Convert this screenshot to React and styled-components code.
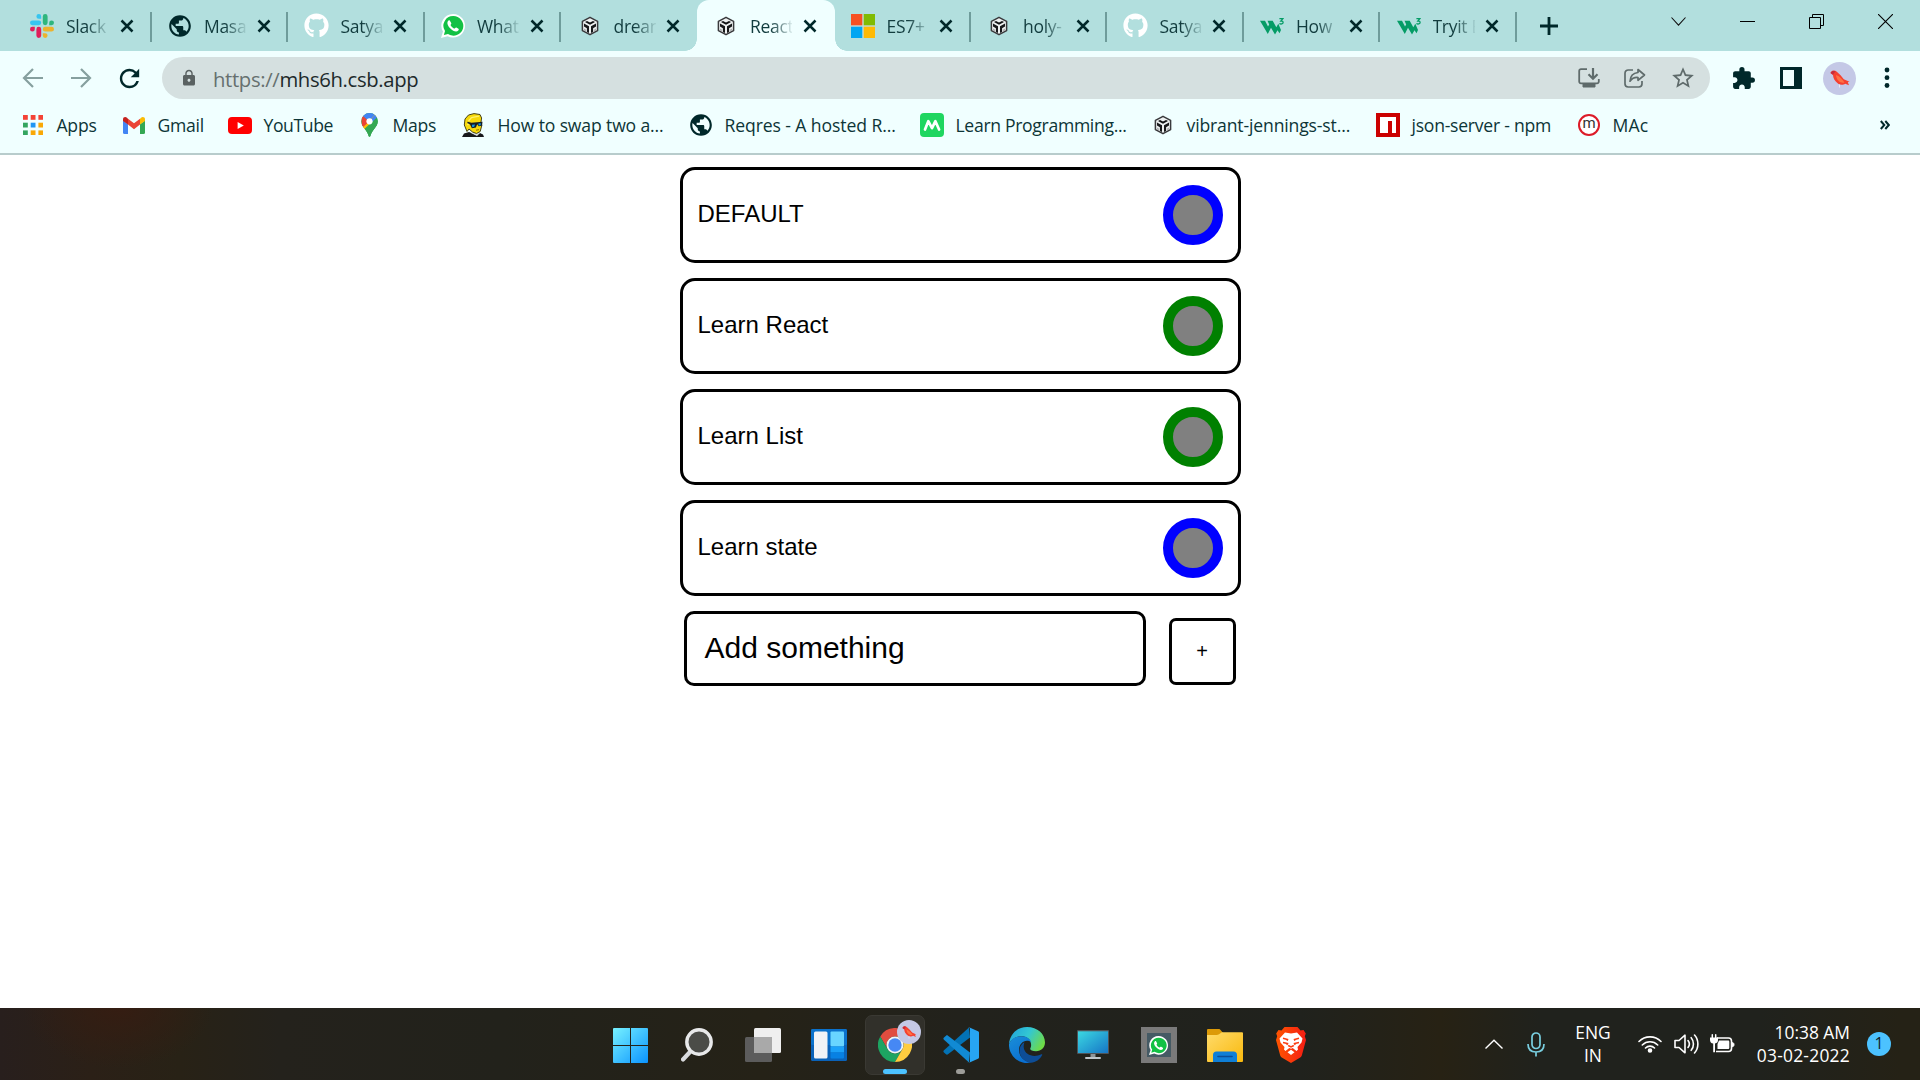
import React from "react";
import styled, { createGlobalStyle, css } from "styled-components";
import { FaGithub } from "react-icons/fa";
import { MdPublic, MdExtension, MdStarOutline, MdLock, MdRefresh } from "react-icons/md";

const GlobalStyle = createGlobalStyle`
  html, body { margin: 0; padding: 0; }
  body {
    width: 1920px;
    height: 1080px;
    overflow: hidden;
    background: #ffffff;
    font-family: "Open Sans", "Noto Sans", sans-serif;
  }
  *, *::before, *::after { box-sizing: border-box; }
  svg { display: block; flex: none; }
`;

const INK = "#00282a";

const Screen = styled.div`
  width: 1920px;
  height: 1080px;
  display: flex;
  flex-direction: column;
  overflow: hidden;
`;

/* ---------- tab strip ---------- */
const TabStrip = styled.div`
  height: 51px;
  background: #b2dfde;
  display: flex;
  align-items: stretch;
  padding-left: 14px;
  flex: none;
`;

const Tab = styled.div`
  position: relative;
  width: 136.5px;
  display: flex;
  align-items: center;
  padding: 0 0 0 17.5px;
  flex: none;
  ${(p) =>
    p.$active &&
    css`
      background: #f0ffff;
      border-radius: 12px 12px 0 0;
      width: 138px;
      margin-right: -1.5px;
      &::before, &::after {
        content: "";
        position: absolute;
        bottom: 0;
        width: 12px;
        height: 12px;
      }
      &::before {
        left: -12px;
        background: radial-gradient(circle at 0 0, transparent 11.5px, #f0ffff 12px);
      }
      &::after {
        right: -12px;
        background: radial-gradient(circle at 100% 0, transparent 11.5px, #f0ffff 12px);
      }
    `}
`;

const TabDivider = styled.span`
  position: absolute;
  right: -1px;
  top: 12px;
  width: 2px;
  height: 30px;
  background: #6f9c9b;
`;

const IconBox = styled.span`
  width: 24px;
  height: 24px;
  display: flex;
  align-items: center;
  justify-content: center;
  flex: none;
  margin-left: ${(p) => p.$shift || 0}px;
`;

const TabTitle = styled.span`
  width: 42px;
  margin-left: 12px;
  overflow: hidden;
  white-space: nowrap;
  font-size: 17.5px;
  letter-spacing: -0.3px;
  line-height: 26px;
  color: #123c3e;
  mask-image: linear-gradient(90deg, #000 50%, transparent 105%);
`;

const CloseBox = styled.span`
  display: flex;
  margin-left: ${(p) => 10.5 + (p.$extra || 0)}px;
`;

const NewTab = styled.div`
  display: flex;
  align-items: center;
  margin-left: 24px;
`;

const WindowButtons = styled.div`
  margin-left: auto;
  display: flex;
  align-items: flex-start;
  gap: 54px;
  padding: 14px 27px 0 0;
`;

/* ---------- toolbar ---------- */
const Toolbar = styled.div`
  height: 54px;
  padding: 6px 24px 6px 22px;
  display: flex;
  align-items: center;
  background: #f0ffff;
  flex: none;
`;

const NavButtons = styled.div`
  display: flex;
  align-items: center;
  width: 140px;
`;

const AddressBar = styled.div`
  width: 1548px;
  height: 42px;
  border-radius: 21px;
  background: #d5e0e0;
  display: flex;
  align-items: center;
  padding: 0 14px 0 18px;
`;

const Url = styled.span`
  margin-left: 15px;
  padding-top: 1px;
  font-size: 20.3px;
  line-height: 30px;
  color: #1d2a2b;
  letter-spacing: -0.35px;
`;

const Scheme = styled.span`
  color: #66706f;
`;

const AddressActions = styled.div`
  margin-left: auto;
  display: flex;
  align-items: center;
  gap: 24px;
`;

const ToolbarActions = styled.div`
  margin-left: auto;
  display: flex;
  align-items: center;
`;

const Spacer = styled.span`
  width: ${(p) => p.$w}px;
  flex: none;
`;

/* ---------- bookmarks ---------- */
const BookmarkBar = styled.div`
  height: 50px;
  padding: 0 30px 8px 21px;
  display: flex;
  align-items: center;
  background: #f0ffff;
  border-bottom: 2px solid #b8cccc;
  flex: none;
`;

const Bookmark = styled.div`
  display: flex;
  align-items: center;
  width: ${(p) => p.$w}px;
  flex: none;
`;

const BookmarkLabel = styled.span`
  margin-left: 11.5px;
  font-size: 17.6px;
  line-height: 26px;
  white-space: nowrap;
  color: #0d3537;
  letter-spacing: ${(p) => (p.$spacing === undefined ? -0.25 : p.$spacing)}px;
`;

const More = styled.span`
  margin-left: auto;
  display: flex;
`;

/* ---------- todo page ---------- */
const Page = styled.main`
  flex: 1;
  background: #ffffff;
  display: flex;
  flex-direction: column;
  align-items: center;
  padding-top: 12px;
  font-family: "Liberation Sans", Arial, sans-serif;
  color: #000;
`;

const TodoList = styled.div`
  width: 561px;
  display: flex;
  flex-direction: column;
  gap: 15px;
`;

const TodoCard = styled.div`
  height: 96px;
  border: 3px solid #000;
  border-radius: 15px;
  padding: 0 15px;
  display: flex;
  align-items: center;
  justify-content: space-between;
`;

const TodoText = styled.span`
  font-size: 24px;
  line-height: 28px;
  margin-bottom: 3px;
`;

const StatusDot = styled.span`
  width: 60px;
  height: 60px;
  border-radius: 50%;
  border: 10px solid ${(p) => (p.$done ? "green" : "blue")};
  background: gray;
`;

const AddRow = styled.div`
  display: flex;
  align-items: flex-end;
  justify-content: space-between;
  padding: 0 5px 0 4px;
`;

const AddField = styled.div`
  width: 462px;
  height: 75px;
  border: 3px solid #000;
  border-radius: 10px;
  padding: 0 18px 1px;
  display: flex;
  align-items: center;
  font-size: 30px;
`;

const AddButton = styled.div`
  width: 67px;
  height: 67px;
  margin-bottom: 1px;
  border: 3px solid #000;
  border-radius: 7px;
  display: flex;
  align-items: center;
  justify-content: center;
  font-size: 20px;
`;

/* ---------- taskbar ---------- */
const Taskbar = styled.footer`
  height: 72px;
  flex: none;
  display: flex;
  align-items: stretch;
  padding-left: 597.5px;
  background:
    radial-gradient(ellipse 95px 60px at 118px 0, #351d12 0%, rgba(53, 29, 18, 0) 100%),
    linear-gradient(90deg, #281f1d 0, #2b2017 90px, #282216 180px, #24221c 280px, #22221b 500px, #252217 760px, #22221c 960px, #20221d 1300px, #272214 1440px, #20221d 1540px, #20221d 1760px, #252216 1900px);
`;

const AppSlot = styled.div`
  position: relative;
  width: 66px;
  display: flex;
  align-items: center;
  justify-content: center;
  padding-top: 2px;
`;

const ActiveTile = styled.div`
  width: 60px;
  height: 60px;
  border-radius: 7px;
  background: #31302a;
  border: 1px solid #3a3933;
  display: flex;
  align-items: center;
  justify-content: center;
`;

const Indicator = styled.span`
  position: absolute;
  bottom: 6px;
  left: ${(p) => 33 - p.$w / 2}px;
  width: ${(p) => p.$w}px;
  height: 5px;
  border-radius: 3px;
  background: ${(p) => p.$color};
`;

const AvatarBadge = styled.span`
  position: absolute;
  left: 35px;
  top: 12px;
`;

const Tray = styled.div`
  margin-left: auto;
  display: flex;
  align-items: center;
  padding-right: 29px;
  color: #fff;
`;

const TrayText = styled.div`
  width: ${(p) => p.$w}px;
  text-align: ${(p) => p.$align};
  font-size: 17.4px;
  line-height: 23px;
  white-space: nowrap;
  padding-bottom: 1px;
`;

const TrayLine = styled.div`
  letter-spacing: ${(p) => p.$spacing || 0}px;
`;

const CountBadge = styled.div`
  width: 24px;
  height: 24px;
  border-radius: 50%;
  background: #4cc2ff;
  color: #10202a;
  font-size: 16px;
  line-height: 23px;
  text-align: center;
`;

/* ---------- drawings ---------- */
const Slack = () => (
  <svg width="24" height="24" viewBox="0 0 24 24">
    <path fill="#36c5f0" d="M8.8 0a2.4 2.4 0 1 0 0 4.8h2.4V2.4A2.4 2.4 0 0 0 8.8 0zM2.4 6.4a2.4 2.4 0 0 0 0 4.8h6.4a2.4 2.4 0 0 0 0-4.8z" />
    <path fill="#2eb67d" d="M24 8.8a2.4 2.4 0 1 0-4.8 0v2.4h2.4A2.4 2.4 0 0 0 24 8.8zM17.6 2.4a2.4 2.4 0 0 0-4.8 0v6.4a2.4 2.4 0 0 0 4.8 0z" />
    <path fill="#ecb22e" d="M15.2 24a2.4 2.4 0 1 0 0-4.8h-2.4v2.4a2.4 2.4 0 0 0 2.4 2.4zM21.6 17.6a2.4 2.4 0 0 0 0-4.8h-6.4a2.4 2.4 0 0 0 0 4.8z" />
    <path fill="#e01e5a" d="M0 15.2a2.4 2.4 0 1 0 4.8 0v-2.4H2.4A2.4 2.4 0 0 0 0 15.2zM6.400 21.600a2.400 2.400 0 0 0 4.800 0v-6.400a2.400 2.400 0 0 0-4.800 0z" />
  </svg>
);

const Globe = () => <MdPublic size={26} color={INK} />;
const Octocat = () => <FaGithub size={25} color="#ffffff" />;

const WhatsBubble = ({ size = 24 }) => (
  <svg width={size} height={size} viewBox="0 0 24 24">
    <path fill="#fff" d="M12.2 0A11.7 11.7 0 0 0 2 17.6L0 24l6.6-1.8A11.8 11.8 0 1 0 12.2 0z" />
    <path fill="#12c144" d="M12.2 2.1a9.7 9.7 0 0 0-8.2 15l-1.1 4 4.1-1.1a9.8 9.8 0 1 0 5.2-17.9z" />
    <path fill="#fff" d="M8.9 6.7c-.4-.6-1-.5-1.4-.1-2.2 2.200-.8 5.300 1.900 8 2.700 2.600 6 4 7.900 2 .6-.7.600-1.500.1-1.900l-2-1.100c-.5-.3-.8-.1-1.200.4-.4.600-.7.700-1.300.4-1.500-.7-2.500-1.700-3.300-3.100-.2-.4.100-.6.500-1.100.3-.4.300-.6.100-1.100z" />
  </svg>
);

const Cube = () => (
  <svg width="20" height="20" viewBox="0 0 20 20">
    <path d="M10 1.300 17.600 5.400v9.200L10 18.700 2.400 14.600V5.400z" fill="#eef1f1" stroke="#3a3a3d" strokeWidth="1.500" strokeLinejoin="round" />
    <path d="M5 6 7 4.900 10 6.500l3-1.600L15 6 10 8.800z" fill="#101113" />
    <path d="M4 7.400 9 10.200V17L6.900 15.900v-3.700L4 10.500z" fill="#18191b" />
    <path d="M16 7.400 11 10.200V17l2.100-1.100v-3.700l2.900-1.700z" fill="#18191b" />
    <path d="M4.200 12.600l1.500.9v1.800l-1.500-.8zM15.800 12.600l-1.500.9v1.800l1.500-.8z" fill="#9a9c9d" />
  </svg>
);

const Microsoft = () => (
  <svg width="24" height="24" viewBox="0 0 24 24">
    <rect width="24" height="24" fill="#c5dcd8" />
    <rect width="11.300" height="11.300" fill="#f65022" />
    <rect x="12.700" width="11.300" height="11.300" fill="#80bb03" />
    <rect y="12.700" width="11.300" height="11.300" fill="#01a6f2" />
    <rect x="12.700" y="12.700" width="11.300" height="11.300" fill="#ffba06" />
  </svg>
);

const W3 = () => (
  <svg width="24" height="24" viewBox="0 0 24 24">
    <path d="M0 6.800h5l3 5.800 1.200-2.200-1.700-3.600h5.200l3.600 6.500 2-3.500 2.700 6.200-1.500 3.200-2-3-2.500 4.300-4-6.700-3.200 6.200z" fill="#059c66" />
    <path d="M19.400 4.600h3.400l-1.900 2.400c1.400-.1 2.200.5 2.200 1.500 0 1.400-2.200 2-3.700 1" fill="none" stroke="#059c66" strokeWidth="1.300" />
  </svg>
);

const Close = () => (
  <svg width="14" height="14" viewBox="0 0 14 14">
    <path d="M1.500 1.500 12.500 12.500M12.500 1.500 1.500 12.500" stroke={INK} strokeWidth="2.500" />
  </svg>
);

const Arrow = ({ flip }) => (
  <svg width="22" height="22" viewBox="0 0 22 22">
    <path
      d={flip ? "M1 11H19.500M11 2l9 9-9 9" : "M21 11H2.500M11 2l-9 9 9 9"}
      fill="none"
      stroke="#86a09f"
      strokeWidth="2.200"
    />
  </svg>
);

const AppsGrid = () => (
  <svg width="20" height="20" viewBox="0 0 20 20">
    {["#f44336", "#f44336", "#f44336", "#34a560", "#2196f3", "#f9a806", "#34a560", "#f9a806", "#f9a806"].map((c, i) => (
      <rect key={i} x={(i % 3) * 7.7} y={Math.floor(i / 3) * 7.7} width="4.8" height="4.8" fill={c} />
    ))}
  </svg>
);

const Gmail = () => (
  <svg width="22" height="17" viewBox="0 0 22 17">
    <path d="M0 3.500 5 7.300V17H1.500A1.500 1.500 0 0 1 0 15.500z" fill="#4285f4" />
    <path d="M22 3.500 17 7.300V17h3.500a1.500 1.500 0 0 0 1.500-1.500z" fill="#34a853" />
    <path d="M5 1.700 11 6.200 17 1.700V7.600L11 12.200 5 7.600z" fill="#ea4335" />
    <path d="M0 2.400C0 .2 2.300-.6 4 .8L5 1.700V7.600L0 3.900z" fill="#c5221f" />
    <path d="M22 2.400C22 .2 19.700-.6 18 .8L17 1.700V7.600L22 3.900z" fill="#fbbc04" />
  </svg>
);

const YouTube = () => (
  <svg width="24" height="17" viewBox="0 0 24 17">
    <rect width="24" height="17" rx="4" fill="#ff0000" />
    <path d="M9.600 5v7l6.200-3.500z" fill="#fff" />
  </svg>
);

const MapsPin = () => (
  <svg width="17" height="24" viewBox="0 0 17 24">
    <defs>
      <clipPath id="pin">
        <path d="M8.500 0A8.300 8.300 0 0 0 .2 8.300c0 3 1.500 5 3.200 7.200C5.300 18 6.700 20 7.500 22.800c.3 1.200 1.700 1.200 2 0 .8-2.800 2.200-4.800 4.100-7.300 1.700-2.200 3.200-4.200 3.200-7.200A8.300 8.300 0 0 0 8.500 0z" />
      </clipPath>
    </defs>
    <g clipPath="url(#pin)">
      <rect width="17" height="24" fill="#34a853" />
      <path d="M0 16 17-3 17 3 3 18z" fill="#fbbc04" />
      <path d="M8.500 8.500 15 0h2v4L8.500 13z" fill="#4285f4" />
      <path d="M17 3.500v22H1.500L3.500 15.800z" fill="#34a853" />
      <path d="M0 0h15L8 8.500 0 2z" fill="#4285f4" />
      <path d="M0 0h2v3l6 5.500L1 16z" fill="#ea4335" />
      <path d="M2 14 8.500 8.500 3.400 16z" fill="#fbbc04" />
    </g>
    <circle cx="8.500" cy="8.300" r="3.100" fill="#fff" />
  </svg>
);

const CoolGuy = () => (
  <svg width="24" height="24" viewBox="0 0 24 24">
    <path d="M0 24l2-3.500 5-1.500 7 3 4-2 3 1.500 1 2.500z" fill="#17181b" />
    <path d="M9 20l6 3 3-3v-3z" fill="#d9dfe0" />
    <path d="M5 18.500 2.300 12 3 6 6.500 2 12 .6l6 .9L19.600 5 19 9l.8 3.500-1.600 6-3.700 2-4-1.500L7 16z" fill="#f6d90b" stroke="#33310e" strokeWidth=".9" />
    <path d="M6.500 8 9.500 4.500l7.500-1.300M5.500 12l1.500-2" fill="none" stroke="#fff16b" strokeWidth="1.300" />
    <path d="M5.500 8.800l4 .9L20.500 8.800 20 12.800l-3.300.5-1.500-2-1.300 3.200-4 .8-1.900-3.900-2.700-1.300z" fill="#131c24" />
    <path d="M10 11.800l3-.4-.8 2.400-2 .5zM16.300 10.600l2.600-.4-.3 2-1.800.3z" fill="#1399e8" />
    <path d="M14 17.200l3-.5" stroke="#8a6d08" strokeWidth="1" />
  </svg>
);

const MasaiM = () => (
  <svg width="24" height="24" viewBox="0 0 24 24">
    <rect width="24" height="24" rx="4" fill="#1fd660" />
    <path d="M5 16.500 8.300 8.200l3.700 7 3.400-7 3.700 8.300" fill="none" stroke="#fff" strokeWidth="2.700" strokeLinecap="round" strokeLinejoin="round" />
  </svg>
);

const Npm = () => (
  <svg width="24" height="24" viewBox="0 0 24 24">
    <rect width="24" height="24" fill="#cb0000" />
    <path d="M4 4h16v16h-4V8h-4v12H4z" fill="#fff" />
  </svg>
);

const MacLetter = styled.span`
  width: 22px;
  height: 22px;
  border: 2px solid #dc1b28;
  border-radius: 50%;
  background: #fff;
  color: #333;
  font-family: Roboto, sans-serif;
  font-size: 15px;
  line-height: 15px;
  text-align: center;
`;

const Bird = ({ size = 33 }) => (
  <svg width={size} height={size} viewBox="0 0 33 33">
    <circle cx="16.500" cy="16.500" r="16.500" fill="#c4c8e6" />
    <path d="M7.500 11c.6-2.400 4-3.400 6.300-1.200 2.700 2.200 5 4.700 7 7.400l5.700 2.600-1.700.5 1.200 3-3.800-1.600c-1.500 1.200-4.700 1.600-7 0-3.800-2.700-5-5.700-5.200-8.700z" fill="#f5402f" />
    <path d="M13 13c4 1.500 6 4 8.500 7.500-3.500 1-8-1.500-8.500-7.500z" fill="#ff7043" />
    <path d="M7.500 11l2-2.300 3 .6-2.500 3.500z" fill="#c52b3c" />
    <path d="M16.500 22.500v3" stroke="#e8e9f5" strokeWidth="1" />
  </svg>
);

const Install = () => (
  <svg width="22" height="20" viewBox="0 0 22 20" fill="none" stroke="#5f6b6b" strokeWidth="1.800">
    <path d="M9 1.200H3a1.800 1.800 0 0 0-1.800 1.800v10.500A1.800 1.800 0 0 0 3 15.300h16a1.800 1.800 0 0 0 1.800-1.800V11" />
    <path d="M15 0v10M10.500 6.200 15 10.700l4.500-4.500" strokeWidth="2.200" />
    <path d="M5 16h12v3H5z" fill="#5f6b6b" strokeWidth="1" />
  </svg>
);

const Share = () => (
  <svg width="22" height="20" viewBox="0 0 22 20" fill="none" stroke="#5f6b6b" strokeWidth="1.700" strokeLinejoin="round">
    <path d="M9 2H4.200A3.200 3.200 0 0 0 1 5.200v10.600A3.200 3.200 0 0 0 4.200 19h10.600a3.200 3.200 0 0 0 3.200-3.200V13" />
    <path d="M14 1.500 20.500 7 14 12.300V9.500c-3.500-.3-6 .8-8 3.700.3-4.700 3-8.200 8-8.700z" />
  </svg>
);

const SidePanel = () => (
  <svg width="22" height="22" viewBox="0 0 22 22">
    <rect width="22" height="22" fill={INK} />
    <rect x="3" y="3" width="11" height="16" fill="#f0ffff" />
  </svg>
);

const Dots = () => (
  <svg width="6" height="22" viewBox="0 0 6 22" fill={INK}>
    <circle cx="3" cy="3" r="2.400" />
    <circle cx="3" cy="10.700" r="2.400" />
    <circle cx="3" cy="18.500" r="2.400" />
  </svg>
);

const WindowsLogo = () => (
  <svg width="35" height="35" viewBox="0 0 35 35">
    <defs>
      <linearGradient id="win" x1="0" y1="0" x2="1" y2="1">
        <stop offset="0" stopColor="#77f2ff" />
        <stop offset="1" stopColor="#0a93ff" />
      </linearGradient>
    </defs>
    <path d="M1 0h16v17H0V1a1 1 0 0 1 1-1zM18 0h16a1 1 0 0 1 1 1v16H18zM0 18h17v17H1a1 1 0 0 1-1-1zM18 18h17v16a1 1 0 0 1-1 1H18z" fill="url(#win)" />
  </svg>
);

const SearchIcon = () => (
  <svg width="32" height="34" viewBox="0 0 32 34">
    <path d="M8.500 24.500 2 31.500" stroke="#d9dbdd" strokeWidth="4.200" strokeLinecap="round" />
    <circle cx="18" cy="14" r="12.200" fill="#4b4c48" stroke="#e8e9ea" strokeWidth="3.400" />
  </svg>
);

const TaskView = () => (
  <svg width="36" height="34" viewBox="0 0 36 34">
    <rect y="9" width="27" height="25" rx="1.500" fill="#5c5c5c" />
    <rect x="9" width="27" height="25" rx="1.500" fill="#efefef" />
    <path d="M9 9h18v16H10a1 1 0 0 1-1-1z" fill="#a9a9a9" />
  </svg>
);

const Widgets = () => (
  <svg width="36" height="32" viewBox="0 0 36 32">
    <rect width="36" height="32" rx="1.500" fill="#0a62b8" />
    <rect width="36" height="16" rx="1.500" fill="#0b72cc" />
    <rect x="3" y="2.500" width="13.500" height="27" rx="1.500" fill="#f1f3f6" />
    <rect x="19.500" y="2.500" width="13.500" height="15" rx="1" fill="#69d5ff" />
    <rect x="19.500" y="17.500" width="13.500" height="6" fill="#1ba1f9" />
    <rect x="19.500" y="23.500" width="13.500" height="6" rx="1" fill="#0781e4" />
  </svg>
);

const Chrome = () => (
  <svg width="34" height="34" viewBox="0 0 48 48">
    <path d="M24 12h20.800A24 24 0 0 0 3.200 12l10.400 18A12 12 0 0 1 24 12z" fill="#e04d3f" />
    <path d="M13.600 30 3.200 12A24 24 0 0 0 24 48l10.400-18a12 12 0 0 1-20.800 0z" fill="#1da462" />
    <path d="M34.400 30 24 48a24 24 0 0 0 20.800-36H24a12 12 0 0 1 10.400 18z" fill="#ffcd40" />
    <circle cx="24" cy="24" r="12" fill="#f1f6f4" />
    <circle cx="24" cy="24" r="9.400" fill="#4688f4" />
  </svg>
);

const VSCode = () => (
  <svg width="36" height="36" viewBox="0 0 36 36">
    <path d="M26 .5 1 23.200c-.8.800-.8 1.700 0 2.400l2 1.700c.6.500 1.300.5 2 0L27 10.500z" fill="#0372b5" />
    <path d="M26 35.500 1 12.800c-.8-.8-.8-1.700 0-2.400l2-1.700c.6-.5 1.300-.5 2 0L27 25.500z" fill="#118ad4" />
    <path d="M26 .2 35 4.300a1.500 1.500 0 0 1 1 1.500v24.400a1.500 1.500 0 0 1-1 1.500l-9 4.100c-.7.100-1.300 0-1.700-.5 1.200.9 2.700 0 2.700-1.400V2.100C27 .7 25.500-.2 24.300.7c.4-.5 1-.6 1.700-.5z" fill="#27a5f3" />
  </svg>
);

const Edge = () => (
  <svg width="36" height="36" viewBox="0 0 36 36">
    <defs>
      <linearGradient id="edgeTop" x1="0" y1=".2" x2="1" y2=".6">
        <stop offset="0" stopColor="#21a5dc" />
        <stop offset=".5" stopColor="#33c7d2" />
        <stop offset="1" stopColor="#6fdb45" />
      </linearGradient>
      <linearGradient id="edgeLeft" x1="0" y1="0" x2=".6" y2="1">
        <stop offset="0" stopColor="#1a8ed8" />
        <stop offset="1" stopColor="#0a6fd0" />
      </linearGradient>
    </defs>
    <path d="M0 17C1 7 8 0 18 0c10.500 0 18 7 18 15.500 0 5-3.800 8.700-9 8.700-4.200 0-6.700-1.500-5.500-3.200C23.500 17 21 9.300 12.500 9.300 6.500 9.300 2 12.500 0 17z" fill="url(#edgeTop)" />
    <path d="M0 17C2 12 6.500 9.200 12.500 9.200c5.500 0 9 3 9.800 6-6-4-12.300 1-12.300 7.800 0 6.500 5 11.500 12 12.500A18 18 0 0 1 0 17z" fill="url(#edgeLeft)" />
    <path d="M15.500 15.200c-8 4-6.500 18 6 20.500 5 .2 9.500-3.500 11.700-7.700.3-.7-.3-1-.9-.7-7.500 3.700-16.300.7-17.500-6.300-.3-2.200 0-4 .7-5.800z" fill="#0d4d96" />
  </svg>
);

const Monitor = () => (
  <svg width="32" height="30" viewBox="0 0 32 30">
    <defs>
      <linearGradient id="mon" x1="0" y1="0" x2="1" y2="1">
        <stop offset="0" stopColor="#3bd8e2" />
        <stop offset="1" stopColor="#1675c6" />
      </linearGradient>
    </defs>
    <path d="M13.500 23h5v4h-5z" fill="#8f9599" />
    <rect width="32" height="24" rx="1" fill="#4f5357" />
    <rect x="1" y="1.300" width="30" height="21.700" fill="url(#mon)" />
    <rect x="8" y="27" width="16" height="2" rx="1" fill="#bfc5ca" />
  </svg>
);

const WhatsTile = styled.span`
  width: 36px;
  height: 36px;
  border: 6px solid #7a7a7a;
  background: #455a64;
  display: flex;
  align-items: center;
  justify-content: center;
`;

const Folder = () => (
  <svg width="36" height="34" viewBox="0 0 36 34">
    <defs>
      <linearGradient id="fold" x1="0" y1="0" x2="1" y2="1">
        <stop offset="0" stopColor="#ffdb6b" />
        <stop offset="1" stopColor="#f9b90d" />
      </linearGradient>
    </defs>
    <path d="M1 1h10.500c1 0 1.700.5 2.300 1.300L16 5v4H0V2a1 1 0 0 1 1-1z" fill="#dc9a08" />
    <path d="M0 7h10c1 0 2-.5 2.700-1.200L15 4.200h20a1 1 0 0 1 1 1V33a1 1 0 0 1-1 1H1a1 1 0 0 1-1-1z" fill="url(#fold)" />
    <path d="M6 34V27a3.500 3.500 0 0 1 3.500-3.500h17A3.500 3.500 0 0 1 30 27v7z" fill="#0f7fd7" />
    <path d="M11 28.500h14" stroke="#0b4d96" strokeWidth="1.600" strokeLinecap="round" />
  </svg>
);

const Brave = () => (
  <svg width="32" height="36" viewBox="0 0 32 36">
    <defs>
      <linearGradient id="brv">
        <stop offset="0" stopColor="#ff5500" />
        <stop offset="1" stopColor="#f51d14" />
      </linearGradient>
    </defs>
    <path d="M9.500 0h13l3 3.500 3-.5 2.300 3.500-1 2.800 1.200 3.700-4 14.700c-.3 1.300-1 2.200-2.200 3L16 36l-8.800-5.300c-1.200-.8-1.900-1.700-2.200-3L1 13l1.200-3.700-1-2.800L3.500 3l3 .5z" fill="url(#brv)" />
    <path d="M10 5.500 16 6.500 22 5.500l5.500 6-1 4-4 4.500.5 2.500-1.500 1.500-3.800-3-1.700.7-1.700-.7-3.800 3L9 22.500 9.500 20l-4-4.500-1-4z" fill="#fff" />
    <path d="M8 11.300l4.500 1.200-.5 1.200M24 11.300l-4.500 1.200.5 1.200M8 15.500l4.500 1-.7 1.500M24 15.500l-4.500 1 .7 1.500M13.200 18.500 16 20l2.800-1.500" fill="none" stroke="#fb3c10" strokeWidth="1.500" />
    <path d="M16 22.800 19.500 25.200 16 28l-3.500-2.800z" fill="#fff" />
  </svg>
);

const Mic = () => (
  <svg width="18" height="25" viewBox="0 0 18 25" fill="none" stroke="#79cfe0" strokeWidth="1.700">
    <rect x="5" y="1" width="8" height="15.500" rx="4" />
    <path d="M1 12c0 5 3 8 8 8s8-3 8-8M9 20v4.500" />
  </svg>
);

const Wifi = () => (
  <svg width="24" height="18" viewBox="0 0 24 18" fill="none" stroke="#fff" strokeWidth="1.600" strokeLinecap="round">
    <path d="M1 6.500a15.500 15.500 0 0 1 22 0M4.300 10a10.900 10.900 0 0 1 15.400 0M7.500 13a6.400 6.400 0 0 1 9 0" />
    <circle cx="12" cy="15.500" r="1.500" fill="#fff" />
  </svg>
);

const Speaker = () => (
  <svg width="25" height="22" viewBox="0 0 25 22" fill="none" stroke="#fff" strokeWidth="1.600" strokeLinecap="round" strokeLinejoin="round">
    <path d="M1 7.500h4L11 2.200v17.600L5 14.500H1z" />
    <path d="M14 7.500c1.600 2 1.600 5 0 7M17.200 4.700c3 3.600 3 9 0 12.600M20.500 2c4.500 5 4.500 13 0 18" />
  </svg>
);

const Battery = () => (
  <svg width="25" height="20" viewBox="0 0 25 20">
    <path d="M7 4h11.500a3 3 0 0 1 3 3v7.500a3 3 0 0 1-3 3H6" fill="none" stroke="#fff" strokeWidth="1.600" />
    <path d="M9 6.500h9c.8 0 1.300.5 1.300 1.300v6c0 .8-.5 1.300-1.300 1.300H7.500V10z" fill="#fff" />
    <path d="M22.500 8.500c2 .3 2 4 0 4.300z" fill="#fff" stroke="#fff" />
    <path d="M0 3.500h8v2.600c0 2-1 3.200-3 3.400v8.700H3.200V9.500C1.200 9.300 0 8 0 6z" fill="#fff" />
    <path d="M2.300 4V.8M5.700 4V.8" stroke="#fff" strokeWidth="1.500" strokeLinecap="round" />
  </svg>
);

/* ---------- data ---------- */
const tabs = [
  { title: "Slack", icon: <Slack />, shift: -1.5, extra: 1.5 },
  { title: "Masa", icon: <Globe /> },
  { title: "Satya", icon: <Octocat /> },
  { title: "What", icon: <WhatsBubble /> },
  { title: "dream", icon: <Cube />, hideDivider: true },
  { title: "React", icon: <Cube />, active: true },
  { title: "ES7+", icon: <Microsoft /> },
  { title: "holy-", icon: <Cube /> },
  { title: "Satya", icon: <Octocat /> },
  { title: "How", icon: <W3 /> },
  { title: "Tryit E", icon: <W3 /> },
];

const bookmarks = [
  { label: "Apps", icon: <AppsGrid />, w: 101 },
  { label: "Gmail", icon: <Gmail />, w: 106 },
  { label: "YouTube", icon: <YouTube />, w: 129, spacing: -0.4 },
  { label: "Maps", icon: <MapsPin />, w: 105 },
  { label: "How to swap two a...", icon: <CoolGuy />, w: 227, spacing: -0.15 },
  { label: "Reqres - A hosted R...", icon: <Globe />, w: 231, spacing: -0.1 },
  { label: "Learn Programming...", icon: <MasaiM />, w: 231, spacing: -0.32 },
  { label: "vibrant-jennings-st...", icon: <Cube />, w: 225, spacing: -0.15 },
  { label: "json-server - npm", icon: <Npm />, w: 201 },
  { label: "MAc", icon: <MacLetter>m</MacLetter>, w: 90, spacing: 0.1 },
];

const todos = [
  { text: "DEFAULT", done: false },
  { text: "Learn React", done: true },
  { text: "Learn List", done: true },
  { text: "Learn state", done: false },
];

export default function App() {
  return (
    <Screen>
      <GlobalStyle />
      <TabStrip>
        {tabs.map((t, i) => (
          <Tab key={i} $active={t.active}>
            <IconBox $shift={t.shift}>{t.icon}</IconBox>
            <TabTitle>{t.title}</TabTitle>
            <CloseBox $extra={t.extra}>
              <Close />
            </CloseBox>
            {!t.active && !t.hideDivider && <TabDivider />}
          </Tab>
        ))}
        <NewTab>
          <svg width="18" height="18" viewBox="0 0 18 18">
            <path d="M9 0V18M0 9H18" stroke={INK} strokeWidth="2.800" />
          </svg>
        </NewTab>
        <WindowButtons>
          <svg width="15" height="15" viewBox="0 0 15 15">
            <path d="M.5 3.500 7.500 11.200 14.500 3.500" fill="none" stroke="#111" strokeWidth="1.100" />
          </svg>
          <svg width="15" height="15" viewBox="0 0 15 15">
            <path d="M0 7.500H15" stroke="#000" />
          </svg>
          <svg width="15" height="15" viewBox="0 0 15 15">
            <path d="M.5 3.500h11v11H.5zM3.500 3.500v-3h11v11h-3" fill="none" stroke="#000" />
          </svg>
          <svg width="15" height="15" viewBox="0 0 15 15">
            <path d="M0 0 15 15M15 0 0 15" stroke="#000" strokeWidth="1.100" />
          </svg>
        </WindowButtons>
      </TabStrip>

      <Toolbar>
        <NavButtons>
          <Arrow />
          <Spacer $w={26} />
          <Arrow flip />
          <Spacer $w={23} />
          <MdRefresh size={29} color={INK} />
        </NavButtons>
        <AddressBar>
          <MdLock size={18} color="#5a6262" />
          <Url>
            <Scheme>https://</Scheme>mhs6h.csb.app
          </Url>
          <AddressActions>
            <Install />
            <Share />
            <MdStarOutline size={26} color="#5f6b6b" />
          </AddressActions>
        </AddressBar>
        <ToolbarActions>
          <MdExtension size={25} color={INK} />
          <Spacer $w={24} />
          <SidePanel />
          <Spacer $w={21} />
          <Bird />
          <Spacer $w={28} />
          <Dots />
          <Spacer $w={6} />
        </ToolbarActions>
      </Toolbar>

      <BookmarkBar>
        {bookmarks.map((b) => (
          <Bookmark key={b.label} $w={b.w}>
            <IconBox>{b.icon}</IconBox>
            <BookmarkLabel $spacing={b.spacing}>{b.label}</BookmarkLabel>
          </Bookmark>
        ))}
        <More>
          <svg width="10" height="10" viewBox="0 0 10 10" fill="none" stroke={INK} strokeWidth="2">
            <path d="M.8 1 4.300 5 .8 9M5.300 1 8.800 5 5.300 9" />
          </svg>
        </More>
      </BookmarkBar>

      <Page>
        <TodoList>
          {todos.map((t) => (
            <TodoCard key={t.text}>
              <TodoText>{t.text}</TodoText>
              <StatusDot $done={t.done} />
            </TodoCard>
          ))}
          <AddRow>
            <AddField>Add something</AddField>
            <AddButton>+</AddButton>
          </AddRow>
        </TodoList>
      </Page>

      <Taskbar>
        <AppSlot><WindowsLogo /></AppSlot>
        <AppSlot><SearchIcon /></AppSlot>
        <AppSlot><TaskView /></AppSlot>
        <AppSlot><Widgets /></AppSlot>
        <AppSlot>
          <ActiveTile><Chrome /></ActiveTile>
          <AvatarBadge><Bird size={24} /></AvatarBadge>
          <Indicator $w={24} $color="#4cc2ff" />
        </AppSlot>
        <AppSlot>
          <VSCode />
          <Indicator $w={9} $color="#9d9d99" />
        </AppSlot>
        <AppSlot><Edge /></AppSlot>
        <AppSlot><Monitor /></AppSlot>
        <AppSlot>
          <WhatsTile><WhatsBubble size={19} /></WhatsTile>
        </AppSlot>
        <AppSlot><Folder /></AppSlot>
        <AppSlot><Brave /></AppSlot>
        <Tray>
          <svg width="18" height="10" viewBox="0 0 18 10">
            <path d="M.5 9.500 9 1.200 17.500 9.500" fill="none" stroke="#fff" strokeWidth="1.400" />
          </svg>
          <Spacer $w={24} />
          <Mic />
          <Spacer $w={28} />
          <TrayText $w={40} $align="center">
            <TrayLine>ENG</TrayLine>
            <TrayLine>IN</TrayLine>
          </TrayText>
          <Spacer $w={25} />
          <Wifi />
          <Spacer $w={12} />
          <Speaker />
          <Spacer $w={11} />
          <Battery />
          <Spacer $w={15} />
          <TrayText $w={100} $align="right">
            <TrayLine>10:38 AM</TrayLine>
            <TrayLine $spacing={0.25}>03-02-2022</TrayLine>
          </TrayText>
          <Spacer $w={17} />
          <CountBadge>1</CountBadge>
        </Tray>
      </Taskbar>
    </Screen>
  );
}
